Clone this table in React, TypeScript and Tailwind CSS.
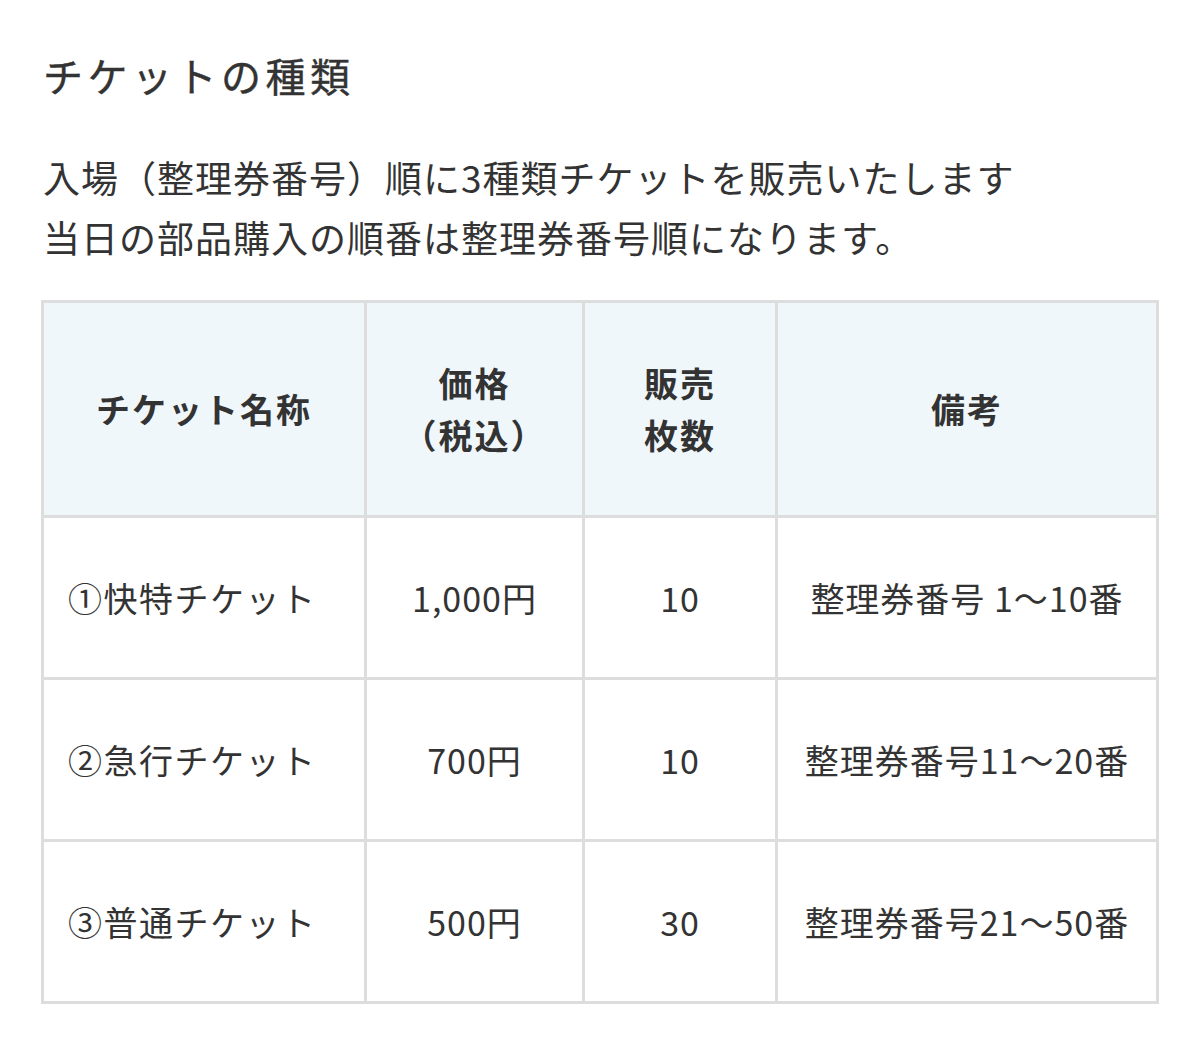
import React from "react"

const rows = [
  { name: "①快特チケット", price: "1,000円", count: "10", note: "整理券番号 1〜10番" },
  { name: "②急行チケット", price: "700円", count: "10", note: "整理券番号11〜20番" },
  { name: "③普通チケット", price: "500円", count: "30", note: "整理券番号21〜50番" },
]

const App = () => {
  return (
    <div className="w-[1200px] h-[1038px] bg-white text-[#333] font-['Noto_Sans_CJK_JP',sans-serif] px-[41px] pt-[47px]">
      <h2 className="text-[40px] leading-[56px] font-normal tracking-[4.5px] pl-[2px] [-webkit-text-stroke:0.4px_#333]">
        チケットの種類
      </h2>

      <p className="mt-[44px] text-[37px] leading-[60px] tracking-[1px] pl-[2px]">
        入場（整理券番号）順に3種類チケットを販売いたします
        <br />
        当日の部品購入の順番は整理券番号順になります。
      </p>

      <table className="mt-[33px] w-[1115px] table-fixed border-collapse border-[3px] border-[#dddddd] text-[34px] tracking-[1px]">
        <colgroup>
          <col className="w-[323px]" />
          <col className="w-[218px]" />
          <col className="w-[193px]" />
          <col className="w-[381px]" />
        </colgroup>
        <thead>
          <tr className="h-[215px] bg-[#f0f7fb] leading-[52px]">
            <th className="border-[3px] border-[#dddddd] text-center font-bold tracking-[2px]">チケット名称</th>
            <th className="border-[3px] border-[#dddddd] text-center font-bold tracking-[2px]">
              価格
              <br />
              （税込）
            </th>
            <th className="border-[3px] border-[#dddddd] text-center font-bold tracking-[2px]">
              販売
              <br />
              枚数
            </th>
            <th className="border-[3px] border-[#dddddd] text-center font-bold tracking-[2px]">備考</th>
          </tr>
        </thead>
        <tbody>
          {rows.map((r) => (
            <tr key={r.name} className="h-[162px]">
              <td className="border-[3px] border-[#dddddd] pl-[24px] text-left tracking-[1.5px]">{r.name}</td>
              <td className="border-[3px] border-[#dddddd] text-center">{r.price}</td>
              <td className="border-[3px] border-[#dddddd] text-center">{r.count}</td>
              <td className="border-[3px] border-[#dddddd] text-center whitespace-nowrap">{r.note}</td>
            </tr>
          ))}
        </tbody>
      </table>
    </div>
  )
}

export default App
